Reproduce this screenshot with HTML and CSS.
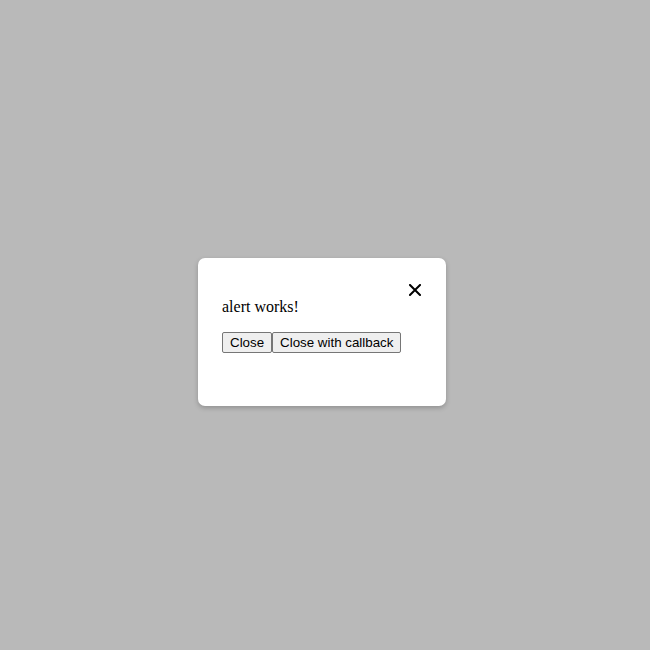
FILE: index.html
```html
<!DOCTYPE html>
<html lang="en">
<head>
<meta charset="utf-8">
<title>Alert</title>
<link rel="stylesheet" href="styles.css">
</head>
<body>
<div class="backdrop">
  <div class="dialog" role="dialog">
    <button class="dialog-close" aria-label="Close">
      <svg width="12" height="12" viewBox="0 0 12 12"><path d="M1 1L11 11M11 1L1 11" stroke="#000" stroke-width="2" stroke-linecap="square" fill="none"/></svg>
    </button>
    <p class="dialog-text">alert works!</p>
    <div class="dialog-actions">
      <button class="btn">Close</button><button class="btn">Close with callback</button>
    </div>
  </div>
</div>
</body>
</html>
```

FILE: styles.css
```css
html, body {
  margin: 0;
  padding: 0;
  background: #b9b9b9;
}
.backdrop {
  width: 650px;
  height: 650px;
  box-sizing: border-box;
  padding: 14px 6px 0 0;
  display: flex;
  align-items: center;
  justify-content: center;
}
.dialog {
  position: relative;
  width: 248px;
  height: 148px;
  box-sizing: border-box;
  padding: 24px;
  background: #fff;
  border-radius: 7px;
  box-shadow: 0 2px 5px rgba(0, 0, 0, 0.22);
}
.dialog-close {
  position: absolute;
  top: 26px;
  right: 25px;
  width: 12px;
  height: 12px;
  padding: 0;
  border: 0;
  background: none;
  display: block;
}
.dialog-close svg {
  display: block;
}
.dialog-text {
  margin: 16px 0 16px;
  font-family: "Liberation Serif", "Times New Roman", serif;
  font-size: 16px;
  line-height: 18px;
  color: #000;
}
.dialog-actions {
  display: flex;
}
.btn {
  font-family: "Liberation Sans", Arial, sans-serif;
  font-size: 13.333px;
  line-height: 15px;
  height: 21px;
  padding: 1px 7px;
  margin: 0;
  border: 1px solid #767676;
  border-radius: 2px;
  background: #efefef;
  color: #000;
}
```
